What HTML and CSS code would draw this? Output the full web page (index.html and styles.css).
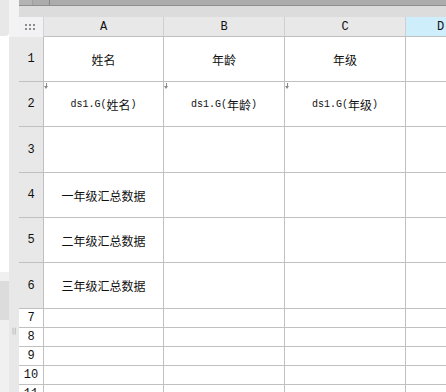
FILE: index.html
```html
<!DOCTYPE html>
<html lang="zh">
<head>
    <meta charset="UTF-8">
    <title>报表设计</title>
    <link rel="stylesheet" href="styles.css">
</head>
<body>
    <div class="app">
        <div class="side">
            <div class="side-top"></div>
            <div class="side-mid"></div>
            <div class="side-light"></div>
            <div class="side-dark"></div>
            <div class="side-rest"></div>
        </div>
        <div class="gutter">
            <div class="gutter-top"></div>
            <div class="gutter-body"><span class="handle">||</span></div>
        </div>
        <div class="sheet">
            <div class="bar-dark">
                <div class="bar-tab"></div>
                <div class="bar-tab second"></div>
            </div>
            <div class="bar-light"></div>
            <div class="grid">
                <!-- cabecera de columnas -->
                <div class="corner">
                    <svg width="11" height="7" viewBox="0 0 11 7">
                        <rect x="0" y="0" width="2" height="2" fill="#8c8c8c"/>
                        <rect x="4" y="0" width="2" height="2" fill="#8c8c8c"/>
                        <rect x="8" y="0" width="2" height="2" fill="#8c8c8c"/>
                        <rect x="0" y="4" width="2" height="2" fill="#8c8c8c"/>
                        <rect x="4" y="4" width="2" height="2" fill="#8c8c8c"/>
                        <rect x="8" y="4" width="2" height="2" fill="#8c8c8c"/>
                    </svg>
                </div>
                <div class="col-head">A</div>
                <div class="col-head">B</div>
                <div class="col-head">C</div>
                <div class="col-head active">D</div>

                <div class="row-head">1</div>
                <div class="cell">姓名</div>
                <div class="cell">年龄</div>
                <div class="cell">年级</div>
                <div class="cell"></div>

                <div class="row-head">2</div>
                <div class="cell expand"><span class="mono">ds1.G(</span>姓名<span class="mono">)</span></div>
                <div class="cell expand"><span class="mono">ds1.G(</span>年龄<span class="mono">)</span></div>
                <div class="cell expand"><span class="mono">ds1.G(</span>年级<span class="mono">)</span></div>
                <div class="cell"></div>

                <div class="row-head">3</div>
                <div class="cell"></div>
                <div class="cell"></div>
                <div class="cell"></div>
                <div class="cell"></div>

                <div class="row-head">4</div>
                <div class="cell">一年级汇总数据</div>
                <div class="cell"></div>
                <div class="cell"></div>
                <div class="cell"></div>

                <div class="row-head">5</div>
                <div class="cell">二年级汇总数据</div>
                <div class="cell"></div>
                <div class="cell"></div>
                <div class="cell"></div>

                <div class="row-head">6</div>
                <div class="cell">三年级汇总数据</div>
                <div class="cell"></div>
                <div class="cell"></div>
                <div class="cell"></div>

                <div class="row-head plain">7</div>
                <div class="cell"></div>
                <div class="cell"></div>
                <div class="cell"></div>
                <div class="cell"></div>

                <div class="row-head plain">8</div>
                <div class="cell"></div>
                <div class="cell"></div>
                <div class="cell"></div>
                <div class="cell"></div>

                <div class="row-head plain">9</div>
                <div class="cell"></div>
                <div class="cell"></div>
                <div class="cell"></div>
                <div class="cell"></div>

                <div class="row-head plain">10</div>
                <div class="cell"></div>
                <div class="cell"></div>
                <div class="cell"></div>
                <div class="cell"></div>

                <div class="row-head plain">11</div>
                <div class="cell"></div>
                <div class="cell"></div>
                <div class="cell"></div>
                <div class="cell"></div>
            </div>
        </div>
    </div>
</body>
</html>
```

FILE: styles.css
```css
body {
    margin: 0;
    font-family: "Noto Sans CJK SC", sans-serif;
    background-color: #ffffff;
}

.app {
    width: 446px;
    height: 392px;
    overflow: hidden;
    display: flex;
}

/* panel izquierdo */
.side {
    width: 9px;
    flex-shrink: 0;
    display: flex;
    flex-direction: column;
}

.side-top {
    height: 36px;
    flex-shrink: 0;
    background-color: #e8e8e8;
    border-bottom-right-radius: 4px;
}

.side-mid {
    height: 236px;
    flex-shrink: 0;
    background-color: #ffffff;
}

.side-light {
    height: 9px;
    flex-shrink: 0;
    background-color: #f0f0f0;
}

.side-dark {
    height: 39px;
    flex-shrink: 0;
    background-color: #dcdcdc;
}

.side-rest {
    flex: 1;
    background-color: #f0f0f0;
}

.gutter {
    width: 10px;
    flex-shrink: 0;
    display: flex;
    flex-direction: column;
}

.gutter-top {
    height: 37px;
    flex-shrink: 0;
    background-color: #f3f3f3;
}

.gutter-body {
    flex: 1;
    background-color: #e8e8e8;
    display: flex;
    justify-content: center;
    padding-top: 290px;
}

.handle {
    font-family: "DejaVu Sans", sans-serif;
    font-size: 7px;
    color: #a0a0a0;
    line-height: 8px;
}

/* hoja */
.sheet {
    flex: 1;
    min-width: 0;
    overflow: hidden;
    display: flex;
    flex-direction: column;
}

.bar-dark {
    height: 5px;
    flex-shrink: 0;
    background-color: #acacac;
    border-bottom: 1px solid #8f8f8f;
    display: flex;
}

.bar-tab {
    width: 13px;
    background-color: #b3b3b3;
    border-right: 1px solid #a0a0a0;
}

.bar-tab.second {
    width: 16px;
    background-color: #acacac;
    border-right: 1px solid #888888;
}

.bar-light {
    height: 11px;
    flex-shrink: 0;
    background-color: #dcdcdc;
}

.grid {
    flex-shrink: 0;
    display: grid;
    grid-template-columns: 25px 120px 121px 121px 80px;
    grid-template-rows: 20px 45px 45px 46px 45px 45px 46px 19px 19px 19px 19px 19px;
}

.corner {
    background-color: #f2f2f4;
    border-right: 1px solid #d4d4d4;
    display: flex;
    align-items: center;
    justify-content: center;
    padding-right: 2px;
}

.col-head {
    background-color: #e8e8e8;
    border-right: 1px solid #cfcfcf;
    border-bottom: 1px solid #c0c0c0;
    font-family: "Liberation Mono", monospace;
    font-size: 12px;
    display: flex;
    align-items: center;
    justify-content: center;
    color: #111111;
}

.col-head.active {
    background-color: #cdeefa;
    justify-content: flex-start;
    padding-left: 31px;
}

.row-head {
    background-color: #e8e8e8;
    border-right: 1px solid #c0c0c0;
    border-bottom: 1px solid #c0c0c0;
    font-family: "Liberation Mono", monospace;
    font-size: 12px;
    display: flex;
    align-items: center;
    justify-content: center;
    color: #111111;
}

.row-head.plain {
    background-color: #ffffff;
}

.cell {
    border-right: 1px solid #c0c0c0;
    border-bottom: 1px solid #c0c0c0;
    font-size: 12px;
    display: flex;
    align-items: center;
    justify-content: center;
    color: #111111;
    position: relative;
}

.mono {
    font-family: "Liberation Mono", monospace;
    font-size: 10px;
}

/* flecha de expansion */
.expand::before {
    content: "";
    position: absolute;
    left: 2px;
    top: 1px;
    width: 1px;
    height: 4px;
    background-color: #8a8a8a;
}

.expand::after {
    content: "";
    position: absolute;
    left: 0px;
    top: 4px;
    border-left: 2.5px solid transparent;
    border-right: 2.5px solid transparent;
    border-top: 3px solid #8a8a8a;
}
```
